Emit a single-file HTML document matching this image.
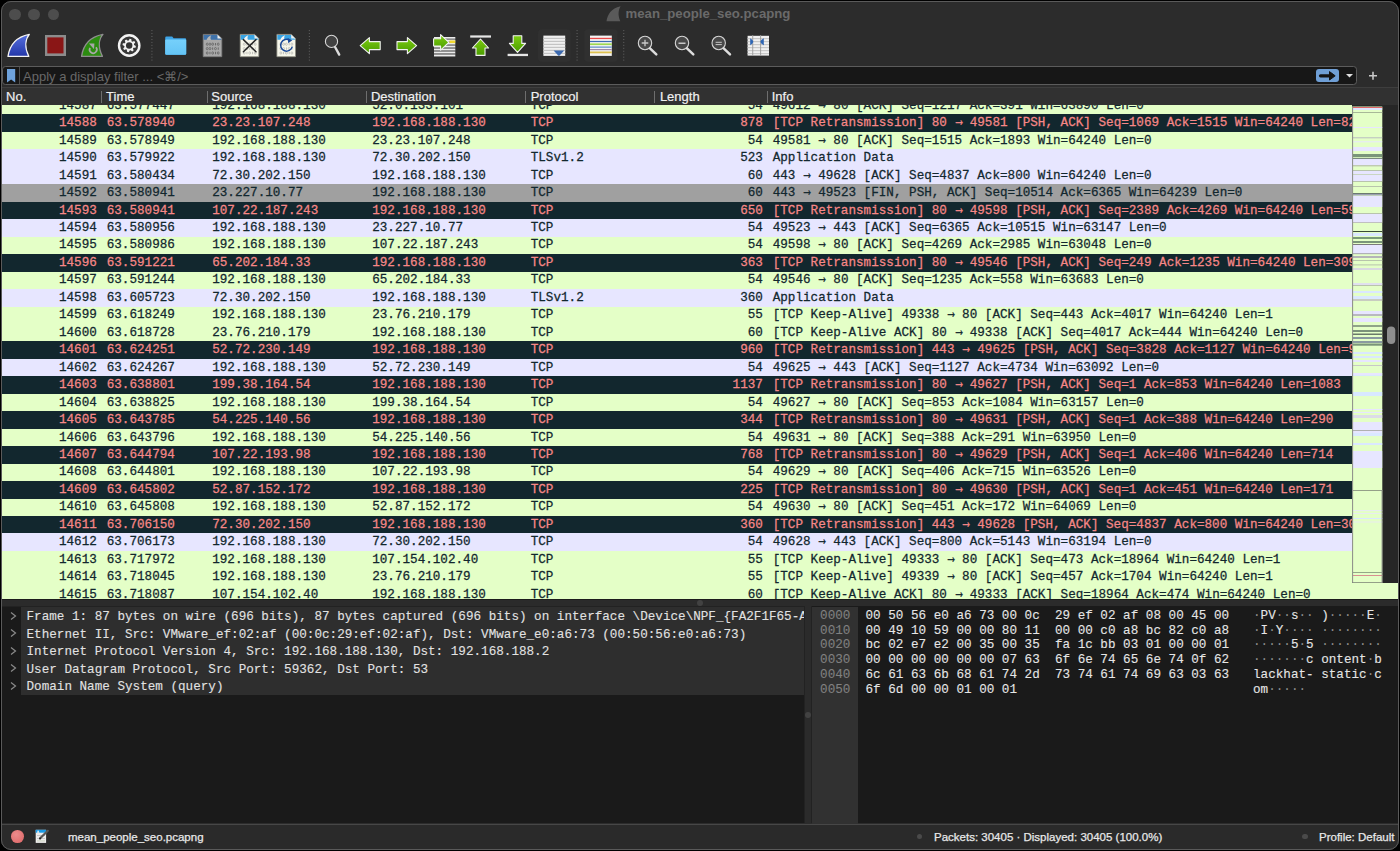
<!DOCTYPE html>
<html><head><meta charset="utf-8">
<style>
*{box-sizing:border-box;margin:0;padding:0}
html,body{width:1400px;height:851px;overflow:hidden;background:#000}
body{position:relative;font-family:"Liberation Sans",sans-serif}
.win{position:absolute;left:0;top:0;width:1400px;height:851px;clip-path:inset(1px 1px 1px 1px round 10px);background:#2c2c2c}
.winb{position:absolute;left:1px;top:1px;width:1398px;height:849px;border-radius:10px;border:1px solid #5a5a5a;z-index:50}
.abs{position:absolute}
.mono{font-family:"Liberation Mono",monospace;font-size:12.63px;white-space:pre}
.r{position:absolute;left:0;width:1397px;height:17.46px;line-height:17.48px}
.r span{position:absolute;top:-0.2px;transform:scaleY(1.04);transform-origin:0 12.5px;-webkit-text-stroke:0.25px currentColor}
.ar{display:inline-block;font-weight:normal;transform:translate(0.4px,-1.5px) scale(0.9,1.45);-webkit-text-stroke:0.35px currentColor}
.g{background:#e4ffc7;color:#12272e}
.l{background:#e7e6ff;color:#12272e}
.d{background:#12272e;color:#f78787}
.s{background:#a0a0a0;color:#12272e}
.hdr span{position:absolute;top:90.4px;font-size:13px;color:#f0f0f0;line-height:14px;-webkit-text-stroke:0.2px currentColor}
.hsep{position:absolute;top:91px;width:1px;height:12px;background:#6e6e6e}
.tr{position:absolute;left:26.5px;color:#e2e2e2;line-height:17.48px;transform:scaleY(1.06);transform-origin:0 12.5px;-webkit-text-stroke:0.1px currentColor}
.chev{position:absolute;left:9.5px}
.hx{position:absolute;color:#e6e6e6;line-height:14.5px;transform:scaleY(1.06);transform-origin:0 11px;-webkit-text-stroke:0.1px currentColor}
.st{position:absolute;top:830px;font-size:11.5px;color:#e8e8e8;line-height:14px;-webkit-text-stroke:0.25px currentColor}
</style></head><body>
<div class="win">

<div class="abs" style="left:625.5px;top:5.5px;font-size:13.2px;font-weight:bold;color:#6a6a6a;line-height:16px">mean_people_seo.pcapng</div>
<svg class="abs" style="left:604px;top:4px" width="20" height="20"><path d="M2.5,17.2 C3.5,11 7,4.2 16.6,2.3 C14.4,6 13.6,11 16.3,17.2 Z" fill="#5a5a5a"/></svg>
<div class="abs" style="left:8.8px;top:8.5px;width:11.8px;height:11.8px;border-radius:50%;background:#4d4d4d"></div>
<div class="abs" style="left:28.1px;top:8.5px;width:11.8px;height:11.8px;border-radius:50%;background:#4d4d4d"></div>
<div class="abs" style="left:47.5px;top:8.5px;width:11.8px;height:11.8px;border-radius:50%;background:#4d4d4d"></div>
<svg class="abs" style="left:0;top:0" width="1400" height="70" viewBox="0 0 1400 70">
<defs>
<linearGradient id="gb" x1="0" y1="0" x2="0" y2="1"><stop offset="0" stop-color="#5670e0"/><stop offset="1" stop-color="#2236a8"/></linearGradient>
<linearGradient id="ga" x1="0" y1="0" x2="0" y2="1"><stop offset="0" stop-color="#7ccc10"/><stop offset="1" stop-color="#4a9c00"/></linearGradient>
<linearGradient id="gf" x1="0" y1="0" x2="0" y2="1"><stop offset="0" stop-color="#76d0fb"/><stop offset="1" stop-color="#64c4f5"/></linearGradient>
</defs>
<path d="M8,56.4 C9.5,46 16,37 29.3,34.4 C25.5,39 24.2,47 28.8,56.4 Z" fill="url(#gb)" stroke="#f4f4f4" stroke-width="1.3" stroke-linejoin="round"/>
<rect x="45" y="35" width="21" height="21" fill="#8c8c8c"/><rect x="47.3" y="37.4" width="16.2" height="16" fill="#8a1616"/>
<path d="M81.6,56.4 C83,46 89.5,37 102.9,34.4 C99,39 97.8,47 102.4,56.4 Z" fill="#2c8c10" stroke="#8e8e8e" stroke-width="1.4" stroke-linejoin="round"/>
<path d="M90.0,47.9 A3.6,3.6 0 1 0 96.0,47.3" fill="none" stroke="#a8a8a8" stroke-width="1.7"/>
<path d="M89,43.4 L94.4,43.4 L94,49.2 Z" fill="#a8a8a8"/>
<circle cx="129.2" cy="45.5" r="10.2" fill="#383838" stroke="#f2f2f2" stroke-width="2.4"/>
<path d="M134.08,45.01 L135.88,45.97 L135.54,47.67 L133.50,47.85 L132.99,48.60 L133.59,50.56 L132.15,51.52 L130.58,50.20 L129.69,50.38 L128.73,52.18 L127.03,51.84 L126.85,49.80 L126.10,49.29 L124.14,49.89 L123.18,48.45 L124.50,46.88 L124.32,45.99 L122.52,45.03 L122.86,43.33 L124.90,43.15 L125.41,42.40 L124.81,40.44 L126.25,39.48 L127.82,40.80 L128.71,40.62 L129.67,38.82 L131.37,39.16 L131.55,41.20 L132.30,41.71 L134.26,41.11 L135.22,42.55 L133.90,44.12 Z" fill="#f2f2f2"/>
<circle cx="129.2" cy="45.5" r="3.2" fill="#333"/>
<rect x="151.3" y="30.10" width="1.2" height="1" fill="#5a5a5a"/>
<rect x="151.3" y="33.05" width="1.2" height="1" fill="#5a5a5a"/>
<rect x="151.3" y="36.00" width="1.2" height="1" fill="#5a5a5a"/>
<rect x="151.3" y="38.95" width="1.2" height="1" fill="#5a5a5a"/>
<rect x="151.3" y="41.90" width="1.2" height="1" fill="#5a5a5a"/>
<rect x="151.3" y="44.85" width="1.2" height="1" fill="#5a5a5a"/>
<rect x="151.3" y="47.80" width="1.2" height="1" fill="#5a5a5a"/>
<rect x="151.3" y="50.75" width="1.2" height="1" fill="#5a5a5a"/>
<rect x="151.3" y="53.70" width="1.2" height="1" fill="#5a5a5a"/>
<rect x="151.3" y="56.65" width="1.2" height="1" fill="#5a5a5a"/>
<rect x="151.3" y="59.60" width="1.2" height="1" fill="#5a5a5a"/>
<rect x="308.8" y="30.10" width="1.2" height="1" fill="#5a5a5a"/>
<rect x="308.8" y="33.05" width="1.2" height="1" fill="#5a5a5a"/>
<rect x="308.8" y="36.00" width="1.2" height="1" fill="#5a5a5a"/>
<rect x="308.8" y="38.95" width="1.2" height="1" fill="#5a5a5a"/>
<rect x="308.8" y="41.90" width="1.2" height="1" fill="#5a5a5a"/>
<rect x="308.8" y="44.85" width="1.2" height="1" fill="#5a5a5a"/>
<rect x="308.8" y="47.80" width="1.2" height="1" fill="#5a5a5a"/>
<rect x="308.8" y="50.75" width="1.2" height="1" fill="#5a5a5a"/>
<rect x="308.8" y="53.70" width="1.2" height="1" fill="#5a5a5a"/>
<rect x="308.8" y="56.65" width="1.2" height="1" fill="#5a5a5a"/>
<rect x="308.8" y="59.60" width="1.2" height="1" fill="#5a5a5a"/>
<rect x="576.5" y="30.10" width="1.2" height="1" fill="#5a5a5a"/>
<rect x="576.5" y="33.05" width="1.2" height="1" fill="#5a5a5a"/>
<rect x="576.5" y="36.00" width="1.2" height="1" fill="#5a5a5a"/>
<rect x="576.5" y="38.95" width="1.2" height="1" fill="#5a5a5a"/>
<rect x="576.5" y="41.90" width="1.2" height="1" fill="#5a5a5a"/>
<rect x="576.5" y="44.85" width="1.2" height="1" fill="#5a5a5a"/>
<rect x="576.5" y="47.80" width="1.2" height="1" fill="#5a5a5a"/>
<rect x="576.5" y="50.75" width="1.2" height="1" fill="#5a5a5a"/>
<rect x="576.5" y="53.70" width="1.2" height="1" fill="#5a5a5a"/>
<rect x="576.5" y="56.65" width="1.2" height="1" fill="#5a5a5a"/>
<rect x="576.5" y="59.60" width="1.2" height="1" fill="#5a5a5a"/>
<rect x="623.1" y="30.10" width="1.2" height="1" fill="#5a5a5a"/>
<rect x="623.1" y="33.05" width="1.2" height="1" fill="#5a5a5a"/>
<rect x="623.1" y="36.00" width="1.2" height="1" fill="#5a5a5a"/>
<rect x="623.1" y="38.95" width="1.2" height="1" fill="#5a5a5a"/>
<rect x="623.1" y="41.90" width="1.2" height="1" fill="#5a5a5a"/>
<rect x="623.1" y="44.85" width="1.2" height="1" fill="#5a5a5a"/>
<rect x="623.1" y="47.80" width="1.2" height="1" fill="#5a5a5a"/>
<rect x="623.1" y="50.75" width="1.2" height="1" fill="#5a5a5a"/>
<rect x="623.1" y="53.70" width="1.2" height="1" fill="#5a5a5a"/>
<rect x="623.1" y="56.65" width="1.2" height="1" fill="#5a5a5a"/>
<rect x="623.1" y="59.60" width="1.2" height="1" fill="#5a5a5a"/>
<path d="M165.2,38 Q165.2,36.6 166.4,36.6 L172.2,36.6 L173.6,38.2 L185,38.2 Q186.2,38.2 186.2,39.4 L186.2,53.6 Q186.2,54.8 185,54.8 L166.4,54.8 Q165.2,54.8 165.2,53.6 Z" fill="#3ea4e6"/>
<path d="M165.2,40.4 Q165.2,39.4 166.4,39.4 L185,39.4 Q186.2,39.4 186.2,40.4 L186.2,53.6 Q186.2,54.8 185,54.8 L166.4,54.8 Q165.2,54.8 165.2,53.6 Z" fill="url(#gf)"/>
<path d="M203.2,34.4 L217.7,34.4 L221.79999999999998,38.5 L221.79999999999998,56.7 L203.2,56.7 Z" fill="#a8a8a8" stroke="#7a7a7a" stroke-width="0.8"/>
<path d="M203.7,35 L217.39999999999998,35 L221.2,38.8 L221.2,39.8 L203.7,39.8 Z" fill="#3f72aa"/>
<path d="M217.5,34.8 L217.5,38.6 L221.39999999999998,38.6 Z" fill="#eeeeee"/>
<path d="M206.6,39.9 C207.39999999999998,37.4 209.0,35.8 211.39999999999998,35.2 C210.39999999999998,36.6 210.2,38.4 211.0,39.9 Z" fill="#b8b8b8"/>
<ellipse cx="207.20" cy="44.20" rx="0.95" ry="1.15" fill="none" stroke="#5c5c5c" stroke-width="0.7"/>
<ellipse cx="209.95" cy="44.20" rx="0.95" ry="1.15" fill="none" stroke="#5c5c5c" stroke-width="0.7"/>
<ellipse cx="212.70" cy="44.20" rx="0.95" ry="1.15" fill="none" stroke="#5c5c5c" stroke-width="0.7"/>
<rect x="215.05" y="43.00" width="0.8" height="2.4" fill="#5c5c5c"/>
<ellipse cx="218.20" cy="44.20" rx="0.95" ry="1.15" fill="none" stroke="#5c5c5c" stroke-width="0.7"/>
<ellipse cx="207.20" cy="48.60" rx="0.95" ry="1.15" fill="none" stroke="#5c5c5c" stroke-width="0.7"/>
<ellipse cx="209.95" cy="48.60" rx="0.95" ry="1.15" fill="none" stroke="#5c5c5c" stroke-width="0.7"/>
<rect x="212.30" y="47.40" width="0.8" height="2.4" fill="#5c5c5c"/>
<ellipse cx="215.45" cy="48.60" rx="0.95" ry="1.15" fill="none" stroke="#5c5c5c" stroke-width="0.7"/>
<rect x="217.80" y="47.40" width="0.8" height="2.4" fill="#5c5c5c"/>
<ellipse cx="207.20" cy="53.00" rx="0.95" ry="1.15" fill="none" stroke="#5c5c5c" stroke-width="0.7"/>
<rect x="209.55" y="51.80" width="0.8" height="2.4" fill="#5c5c5c"/>
<ellipse cx="212.70" cy="53.00" rx="0.95" ry="1.15" fill="none" stroke="#5c5c5c" stroke-width="0.7"/>
<rect x="215.05" y="51.80" width="0.8" height="2.4" fill="#5c5c5c"/>
<ellipse cx="218.20" cy="53.00" rx="0.95" ry="1.15" fill="none" stroke="#5c5c5c" stroke-width="0.7"/>
<path d="M240.2,34.4 L254.7,34.4 L258.8,38.5 L258.8,56.7 L240.2,56.7 Z" fill="#f6f6ea" stroke="#8a8a80" stroke-width="0.8"/>
<path d="M240.7,35 L254.39999999999998,35 L258.2,38.8 L258.2,39.8 L240.7,39.8 Z" fill="#39a4e4"/>
<path d="M254.5,34.8 L254.5,38.6 L258.4,38.6 Z" fill="#eeeeee"/>
<path d="M243.6,39.9 C244.39999999999998,37.4 246.0,35.8 248.39999999999998,35.2 C247.39999999999998,36.6 247.2,38.4 248.0,39.9 Z" fill="#f4f4f4"/>
<ellipse cx="244.20" cy="44.20" rx="0.95" ry="1.15" fill="none" stroke="#b4b4b0" stroke-width="0.7"/>
<ellipse cx="246.95" cy="44.20" rx="0.95" ry="1.15" fill="none" stroke="#b4b4b0" stroke-width="0.7"/>
<ellipse cx="249.70" cy="44.20" rx="0.95" ry="1.15" fill="none" stroke="#b4b4b0" stroke-width="0.7"/>
<rect x="252.05" y="43.00" width="0.8" height="2.4" fill="#b4b4b0"/>
<ellipse cx="255.20" cy="44.20" rx="0.95" ry="1.15" fill="none" stroke="#b4b4b0" stroke-width="0.7"/>
<ellipse cx="244.20" cy="48.60" rx="0.95" ry="1.15" fill="none" stroke="#b4b4b0" stroke-width="0.7"/>
<ellipse cx="246.95" cy="48.60" rx="0.95" ry="1.15" fill="none" stroke="#b4b4b0" stroke-width="0.7"/>
<rect x="249.30" y="47.40" width="0.8" height="2.4" fill="#b4b4b0"/>
<ellipse cx="252.45" cy="48.60" rx="0.95" ry="1.15" fill="none" stroke="#b4b4b0" stroke-width="0.7"/>
<rect x="254.80" y="47.40" width="0.8" height="2.4" fill="#b4b4b0"/>
<ellipse cx="244.20" cy="53.00" rx="0.95" ry="1.15" fill="none" stroke="#b4b4b0" stroke-width="0.7"/>
<rect x="246.55" y="51.80" width="0.8" height="2.4" fill="#b4b4b0"/>
<ellipse cx="249.70" cy="53.00" rx="0.95" ry="1.15" fill="none" stroke="#b4b4b0" stroke-width="0.7"/>
<rect x="252.05" y="51.80" width="0.8" height="2.4" fill="#b4b4b0"/>
<ellipse cx="255.20" cy="53.00" rx="0.95" ry="1.15" fill="none" stroke="#b4b4b0" stroke-width="0.7"/>
<path d="M243.4,39.6 L256,51.8 M256,39.6 L243.4,51.8" stroke="#262626" stroke-width="1.5" stroke-linecap="round"/>
<path d="M276.9,34.4 L291.4,34.4 L295.5,38.5 L295.5,56.7 L276.9,56.7 Z" fill="#f6f6ea" stroke="#8a8a80" stroke-width="0.8"/>
<path d="M277.4,35 L291.09999999999997,35 L294.9,38.8 L294.9,39.8 L277.4,39.8 Z" fill="#39a4e4"/>
<path d="M291.2,34.8 L291.2,38.6 L295.09999999999997,38.6 Z" fill="#eeeeee"/>
<path d="M280.29999999999995,39.9 C281.09999999999997,37.4 282.7,35.8 285.09999999999997,35.2 C284.09999999999997,36.6 283.9,38.4 284.7,39.9 Z" fill="#f4f4f4"/>
<ellipse cx="280.90" cy="44.20" rx="0.95" ry="1.15" fill="none" stroke="#b4b4b0" stroke-width="0.7"/>
<ellipse cx="283.65" cy="44.20" rx="0.95" ry="1.15" fill="none" stroke="#b4b4b0" stroke-width="0.7"/>
<ellipse cx="286.40" cy="44.20" rx="0.95" ry="1.15" fill="none" stroke="#b4b4b0" stroke-width="0.7"/>
<rect x="288.75" y="43.00" width="0.8" height="2.4" fill="#b4b4b0"/>
<ellipse cx="291.90" cy="44.20" rx="0.95" ry="1.15" fill="none" stroke="#b4b4b0" stroke-width="0.7"/>
<ellipse cx="280.90" cy="48.60" rx="0.95" ry="1.15" fill="none" stroke="#b4b4b0" stroke-width="0.7"/>
<ellipse cx="283.65" cy="48.60" rx="0.95" ry="1.15" fill="none" stroke="#b4b4b0" stroke-width="0.7"/>
<rect x="286.00" y="47.40" width="0.8" height="2.4" fill="#b4b4b0"/>
<ellipse cx="289.15" cy="48.60" rx="0.95" ry="1.15" fill="none" stroke="#b4b4b0" stroke-width="0.7"/>
<rect x="291.50" y="47.40" width="0.8" height="2.4" fill="#b4b4b0"/>
<ellipse cx="280.90" cy="53.00" rx="0.95" ry="1.15" fill="none" stroke="#b4b4b0" stroke-width="0.7"/>
<rect x="283.25" y="51.80" width="0.8" height="2.4" fill="#b4b4b0"/>
<ellipse cx="286.40" cy="53.00" rx="0.95" ry="1.15" fill="none" stroke="#b4b4b0" stroke-width="0.7"/>
<rect x="288.75" y="51.80" width="0.8" height="2.4" fill="#b4b4b0"/>
<ellipse cx="291.90" cy="53.00" rx="0.95" ry="1.15" fill="none" stroke="#b4b4b0" stroke-width="0.7"/>
<path d="M289.8,40.3 A5.9,5.9 0 1 0 292.3,46.6" fill="none" stroke="#1c4a98" stroke-width="1.5"/>
<path d="M287.6,37.9 L292.3,40.2 L288.3,43.2 Z" fill="#1c4a98"/>
<circle cx="331.5" cy="41.4" r="6.1" fill="#424242" stroke="#d8d8d8" stroke-width="1.1"/>
<path d="M335.2,47.2 L339.2,54.6" stroke="#dcdcdc" stroke-width="2.4" stroke-linecap="round"/>
<path d="M360.2,45.6 L369.4,37.6 L369.4,41.6 L380.2,41.6 L380.2,49.6 L369.4,49.6 L369.4,53.7 Z" fill="url(#ga)" stroke="#f2f2f2" stroke-width="1.1" stroke-linejoin="round"/>
<path d="M416.6,45.6 L407.4,37.6 L407.4,41.6 L397,41.6 L397,49.6 L407.4,49.6 L407.4,53.7 Z" fill="url(#ga)" stroke="#f2f2f2" stroke-width="1.1" stroke-linejoin="round"/>
<rect x="434" y="37.00" width="21.3" height="1.75" fill="#ececec"/>
<rect x="434" y="38.75" width="21.3" height="1.2" fill="#8c8c8c"/>
<rect x="434" y="39.95" width="21.3" height="1.75" fill="#ececec"/>
<rect x="434" y="41.70" width="21.3" height="1.2" fill="#8c8c8c"/>
<rect x="434" y="42.90" width="21.3" height="1.75" fill="#ececec"/>
<rect x="434" y="44.65" width="21.3" height="1.2" fill="#8c8c8c"/>
<rect x="434" y="45.85" width="21.3" height="1.75" fill="#ececec"/>
<rect x="434" y="47.60" width="21.3" height="1.2" fill="#8c8c8c"/>
<rect x="434" y="48.80" width="21.3" height="1.75" fill="#ececec"/>
<rect x="434" y="50.55" width="21.3" height="1.2" fill="#8c8c8c"/>
<rect x="434" y="51.75" width="21.3" height="1.75" fill="#ececec"/>
<rect x="434" y="53.50" width="21.3" height="1.2" fill="#8c8c8c"/>
<rect x="434" y="54.70" width="21.3" height="1.75" fill="#ececec"/>
<rect x="449.5" y="40.5" width="5.8" height="2.6" fill="#f2d830"/>
<path d="M448.8,42.4 L440.6,34.6 L440.6,38.8 L433.6,38.8 L433.6,46 L440.6,46 L440.6,50.2 Z" fill="url(#ga)" stroke="#f2f2f2" stroke-width="1.1" stroke-linejoin="round"/>
<rect x="470.2" y="35.4" width="20.8" height="2.2" fill="#e6e6e6"/>
<path d="M480.5,39 L488.6,48 L485,48 L485,55.4 L476,55.4 L476,48 L472.4,48 Z" fill="url(#ga)" stroke="#f2f2f2" stroke-width="1.1" stroke-linejoin="round"/>
<path d="M517.5,52.4 L525.6,43.4 L521.8,43.4 L521.8,35.7 L513.2,35.7 L513.2,43.4 L509.4,43.4 Z" fill="url(#ga)" stroke="#f2f2f2" stroke-width="1.1" stroke-linejoin="round"/>
<rect x="507.6" y="53.8" width="20.4" height="2.3" fill="#e6e6e6"/>
<rect x="538" y="29.2" width="32.7" height="32.5" rx="4" fill="#303030"/>
<rect x="543.4" y="35.6" width="21.8" height="20.3" fill="#f0f0f0"/>
<rect x="543.4" y="37.80" width="21.8" height="1.2" fill="#c4c4c4"/>
<rect x="543.4" y="40.80" width="21.8" height="1.2" fill="#c4c4c4"/>
<rect x="543.4" y="43.80" width="21.8" height="1.2" fill="#c4c4c4"/>
<rect x="543.4" y="46.80" width="21.8" height="1.2" fill="#c4c4c4"/>
<rect x="543.4" y="49.80" width="21.8" height="1.2" fill="#c4c4c4"/>
<rect x="543.4" y="52.80" width="21.8" height="1.2" fill="#c4c4c4"/>
<path d="M553.6,50.4 L564.2,50.4 L559.4,55.8 L558.4,55.8 Z" fill="#3a68ae"/>
<rect x="584.2" y="29.2" width="33.4" height="32.5" rx="4" fill="#303030"/>
<rect x="590" y="35.6" width="21.8" height="20.3" fill="#f4f4f4"/>
<rect x="590" y="37.8" width="21.8" height="1.3" fill="#e84848"/>
<rect x="590" y="40.9" width="21.8" height="1.2" fill="#3f6cb4"/>
<rect x="590" y="43.4" width="21.8" height="1.7" fill="#9ed850"/>
<rect x="590" y="46.4" width="21.8" height="1.5" fill="#7aa0d0"/>
<rect x="590" y="49.0" width="21.8" height="1.2" fill="#a08aa8"/>
<rect x="590" y="51.5" width="21.8" height="1.8" fill="#dcc050"/>
<circle cx="645" cy="43" r="6.7" fill="#484848" stroke="#d4d4d4" stroke-width="1.1"/>
<path d="M650,48.4 L656.3,54.4" stroke="#dcdcdc" stroke-width="2.5" stroke-linecap="round"/>
<path d="M641.7,43 L648.3,43 M645,39.7 L645,46.3" stroke="#c8c8c8" stroke-width="1.3"/>
<circle cx="682" cy="43" r="6.7" fill="#484848" stroke="#d4d4d4" stroke-width="1.1"/>
<path d="M687,48.4 L693.3,54.4" stroke="#dcdcdc" stroke-width="2.5" stroke-linecap="round"/>
<path d="M678.5,43.2 L685.5,43.2" stroke="#c8c8c8" stroke-width="1.5"/>
<circle cx="718.7" cy="43" r="6.7" fill="#484848" stroke="#d4d4d4" stroke-width="1.1"/>
<path d="M723.7,48.4 L730.0,54.4" stroke="#dcdcdc" stroke-width="2.5" stroke-linecap="round"/>
<path d="M715.6,42.3 L721.8,42.3 M715.6,44.6 L721.8,44.6" stroke="#c8c8c8" stroke-width="1"/>
<rect x="747.6" y="35.8" width="21.4" height="19.8" fill="#f0f0f0"/>
<rect x="747.6" y="38.00" width="21.4" height="1.2" fill="#c8c8c8"/>
<rect x="747.6" y="41.00" width="21.4" height="1.2" fill="#c8c8c8"/>
<rect x="747.6" y="44.00" width="21.4" height="1.2" fill="#c8c8c8"/>
<rect x="747.6" y="47.00" width="21.4" height="1.2" fill="#c8c8c8"/>
<rect x="747.6" y="50.00" width="21.4" height="1.2" fill="#c8c8c8"/>
<rect x="747.6" y="53.00" width="21.4" height="1.2" fill="#c8c8c8"/>
<rect x="752.3" y="35" width="0.9" height="21" fill="#9a9a9a"/><rect x="760.2" y="35" width="0.9" height="21" fill="#9a9a9a"/>
<path d="M750.2,38.2 Q753.3,40 753.3,41.8 Q753.3,43.6 750.2,45.2 Z" fill="#2f66b4"/>
<path d="M763.8,38.2 Q760.4,40 760.4,41.8 Q760.4,43.6 763.8,45.2 Z" fill="#2f66b4"/>
</svg>
<div class="abs" style="left:2px;top:66.2px;width:1355px;height:18.8px;border:1px solid #5c5c5c;border-radius:3.5px;background:#171717"></div>
<div class="abs" style="left:19px;top:67px;width:1px;height:17.4px;background:#4e4e4e"></div>
<svg class="abs" style="left:0;top:60px" width="30" height="30"><path d="M7,9 L15.2,9 L15.2,22.5 L11.1,19.6 L7,22.5 Z" fill="#6ea2dc"/></svg>
<div class="abs" style="left:23px;top:69.5px;font-size:13px;color:#686868;line-height:14px">Apply a display filter ... &lt;⌘/&gt;</div>
<div class="abs" style="left:1315.7px;top:68.9px;width:23.2px;height:13.6px;border-radius:3px;background:#6f9fd6"></div>
<svg class="abs" style="left:1300px;top:60px" width="100" height="30"><path d="M20.5,15.8 L31,15.8" stroke="#141414" stroke-width="3.2" stroke-linecap="round"/><path d="M29.5,11.6 L35.2,15.8 L29.5,20 Z" fill="#141414" stroke="#141414" stroke-width="1" stroke-linejoin="round"/><path d="M46,14 L53,14 L49.5,17.6 Z" fill="#e0e0e0"/><path d="M69,15.7 L77,15.7 M73,11.7 L73,19.7" stroke="#c8c8c8" stroke-width="1.6"/></svg>
<div class="abs" style="left:0;top:87px;width:1400px;height:1px;background:#3e3e3e"></div>
<div class="abs" style="left:0;top:88px;width:1400px;height:17.3px;background:#313131"></div>
<div class="hdr">
<span style="left:6.1px">No.</span>
<span style="left:106.1px">Time</span>
<span style="left:211.3px">Source</span>
<span style="left:370.9px">Destination</span>
<span style="left:530.7px">Protocol</span>
<span style="left:659.9px">Length</span>
<span style="left:771.7px">Info</span>
<div class="hsep" style="left:101.0px"></div>
<div class="hsep" style="left:206.9px"></div>
<div class="hsep" style="left:365.9px"></div>
<div class="hsep" style="left:524.9px"></div>
<div class="hsep" style="left:654.0px"></div>
<div class="hsep" style="left:767.0px"></div>
</div>
<div class="abs" style="left:0;top:105.3px;width:1400px;height:493.50px;overflow:hidden">
<div class="r g mono" style="top:-8.30px;width:1400px"><span style="right:1303.2px">14587</span><span style="left:106.7px">63.577447</span><span style="left:212.2px">192.168.188.130</span><span style="left:372.2px">52.0.133.101</span><span style="left:530.7px">TCP</span><span style="right:637.1px">54</span><span style="left:772.7px">49612 <b class=ar>→</b> 80 [ACK] Seq=1217 Ack=391 Win=63890 Len=0</span></div>
<div class="r d mono" style="top:9.16px;width:1400px"><span style="right:1303.2px">14588</span><span style="left:106.7px">63.578940</span><span style="left:212.2px">23.23.107.248</span><span style="left:372.2px">192.168.188.130</span><span style="left:530.7px">TCP</span><span style="right:637.1px">878</span><span style="left:772.7px">[TCP Retransmission] 80 <b class=ar>→</b> 49581 [PSH, ACK] Seq=1069 Ack=1515 Win=64240 Len=824</span></div>
<div class="r g mono" style="top:26.62px;width:1400px"><span style="right:1303.2px">14589</span><span style="left:106.7px">63.578949</span><span style="left:212.2px">192.168.188.130</span><span style="left:372.2px">23.23.107.248</span><span style="left:530.7px">TCP</span><span style="right:637.1px">54</span><span style="left:772.7px">49581 <b class=ar>→</b> 80 [ACK] Seq=1515 Ack=1893 Win=64240 Len=0</span></div>
<div class="r l mono" style="top:44.08px;width:1400px"><span style="right:1303.2px">14590</span><span style="left:106.7px">63.579922</span><span style="left:212.2px">192.168.188.130</span><span style="left:372.2px">72.30.202.150</span><span style="left:530.7px">TLSv1.2</span><span style="right:637.1px">523</span><span style="left:772.7px">Application Data</span></div>
<div class="r l mono" style="top:61.54px;width:1400px"><span style="right:1303.2px">14591</span><span style="left:106.7px">63.580434</span><span style="left:212.2px">72.30.202.150</span><span style="left:372.2px">192.168.188.130</span><span style="left:530.7px">TCP</span><span style="right:637.1px">60</span><span style="left:772.7px">443 <b class=ar>→</b> 49628 [ACK] Seq=4837 Ack=800 Win=64240 Len=0</span></div>
<div class="r s mono" style="top:79.00px;width:1400px"><span style="right:1303.2px">14592</span><span style="left:106.7px">63.580941</span><span style="left:212.2px">23.227.10.77</span><span style="left:372.2px">192.168.188.130</span><span style="left:530.7px">TCP</span><span style="right:637.1px">60</span><span style="left:772.7px">443 <b class=ar>→</b> 49523 [FIN, PSH, ACK] Seq=10514 Ack=6365 Win=64239 Len=0</span></div>
<div class="r d mono" style="top:96.46px;width:1400px"><span style="right:1303.2px">14593</span><span style="left:106.7px">63.580941</span><span style="left:212.2px">107.22.187.243</span><span style="left:372.2px">192.168.188.130</span><span style="left:530.7px">TCP</span><span style="right:637.1px">650</span><span style="left:772.7px">[TCP Retransmission] 80 <b class=ar>→</b> 49598 [PSH, ACK] Seq=2389 Ack=4269 Win=64240 Len=596</span></div>
<div class="r l mono" style="top:113.92px;width:1400px"><span style="right:1303.2px">14594</span><span style="left:106.7px">63.580956</span><span style="left:212.2px">192.168.188.130</span><span style="left:372.2px">23.227.10.77</span><span style="left:530.7px">TCP</span><span style="right:637.1px">54</span><span style="left:772.7px">49523 <b class=ar>→</b> 443 [ACK] Seq=6365 Ack=10515 Win=63147 Len=0</span></div>
<div class="r g mono" style="top:131.38px;width:1400px"><span style="right:1303.2px">14595</span><span style="left:106.7px">63.580986</span><span style="left:212.2px">192.168.188.130</span><span style="left:372.2px">107.22.187.243</span><span style="left:530.7px">TCP</span><span style="right:637.1px">54</span><span style="left:772.7px">49598 <b class=ar>→</b> 80 [ACK] Seq=4269 Ack=2985 Win=63048 Len=0</span></div>
<div class="r d mono" style="top:148.84px;width:1400px"><span style="right:1303.2px">14596</span><span style="left:106.7px">63.591221</span><span style="left:212.2px">65.202.184.33</span><span style="left:372.2px">192.168.188.130</span><span style="left:530.7px">TCP</span><span style="right:637.1px">363</span><span style="left:772.7px">[TCP Retransmission] 80 <b class=ar>→</b> 49546 [PSH, ACK] Seq=249 Ack=1235 Win=64240 Len=309</span></div>
<div class="r g mono" style="top:166.30px;width:1400px"><span style="right:1303.2px">14597</span><span style="left:106.7px">63.591244</span><span style="left:212.2px">192.168.188.130</span><span style="left:372.2px">65.202.184.33</span><span style="left:530.7px">TCP</span><span style="right:637.1px">54</span><span style="left:772.7px">49546 <b class=ar>→</b> 80 [ACK] Seq=1235 Ack=558 Win=63683 Len=0</span></div>
<div class="r l mono" style="top:183.76px;width:1400px"><span style="right:1303.2px">14598</span><span style="left:106.7px">63.605723</span><span style="left:212.2px">72.30.202.150</span><span style="left:372.2px">192.168.188.130</span><span style="left:530.7px">TLSv1.2</span><span style="right:637.1px">360</span><span style="left:772.7px">Application Data</span></div>
<div class="r g mono" style="top:201.22px;width:1400px"><span style="right:1303.2px">14599</span><span style="left:106.7px">63.618249</span><span style="left:212.2px">192.168.188.130</span><span style="left:372.2px">23.76.210.179</span><span style="left:530.7px">TCP</span><span style="right:637.1px">55</span><span style="left:772.7px">[TCP Keep-Alive] 49338 <b class=ar>→</b> 80 [ACK] Seq=443 Ack=4017 Win=64240 Len=1</span></div>
<div class="r g mono" style="top:218.68px;width:1400px"><span style="right:1303.2px">14600</span><span style="left:106.7px">63.618728</span><span style="left:212.2px">23.76.210.179</span><span style="left:372.2px">192.168.188.130</span><span style="left:530.7px">TCP</span><span style="right:637.1px">60</span><span style="left:772.7px">[TCP Keep-Alive ACK] 80 <b class=ar>→</b> 49338 [ACK] Seq=4017 Ack=444 Win=64240 Len=0</span></div>
<div class="r d mono" style="top:236.14px;width:1400px"><span style="right:1303.2px">14601</span><span style="left:106.7px">63.624251</span><span style="left:212.2px">52.72.230.149</span><span style="left:372.2px">192.168.188.130</span><span style="left:530.7px">TCP</span><span style="right:637.1px">960</span><span style="left:772.7px">[TCP Retransmission] 443 <b class=ar>→</b> 49625 [PSH, ACK] Seq=3828 Ack=1127 Win=64240 Len=906</span></div>
<div class="r l mono" style="top:253.60px;width:1400px"><span style="right:1303.2px">14602</span><span style="left:106.7px">63.624267</span><span style="left:212.2px">192.168.188.130</span><span style="left:372.2px">52.72.230.149</span><span style="left:530.7px">TCP</span><span style="right:637.1px">54</span><span style="left:772.7px">49625 <b class=ar>→</b> 443 [ACK] Seq=1127 Ack=4734 Win=63092 Len=0</span></div>
<div class="r d mono" style="top:271.06px;width:1400px"><span style="right:1303.2px">14603</span><span style="left:106.7px">63.638801</span><span style="left:212.2px">199.38.164.54</span><span style="left:372.2px">192.168.188.130</span><span style="left:530.7px">TCP</span><span style="right:637.1px">1137</span><span style="left:772.7px">[TCP Retransmission] 80 <b class=ar>→</b> 49627 [PSH, ACK] Seq=1 Ack=853 Win=64240 Len=1083</span></div>
<div class="r g mono" style="top:288.52px;width:1400px"><span style="right:1303.2px">14604</span><span style="left:106.7px">63.638825</span><span style="left:212.2px">192.168.188.130</span><span style="left:372.2px">199.38.164.54</span><span style="left:530.7px">TCP</span><span style="right:637.1px">54</span><span style="left:772.7px">49627 <b class=ar>→</b> 80 [ACK] Seq=853 Ack=1084 Win=63157 Len=0</span></div>
<div class="r d mono" style="top:305.98px;width:1400px"><span style="right:1303.2px">14605</span><span style="left:106.7px">63.643785</span><span style="left:212.2px">54.225.140.56</span><span style="left:372.2px">192.168.188.130</span><span style="left:530.7px">TCP</span><span style="right:637.1px">344</span><span style="left:772.7px">[TCP Retransmission] 80 <b class=ar>→</b> 49631 [PSH, ACK] Seq=1 Ack=388 Win=64240 Len=290</span></div>
<div class="r g mono" style="top:323.44px;width:1400px"><span style="right:1303.2px">14606</span><span style="left:106.7px">63.643796</span><span style="left:212.2px">192.168.188.130</span><span style="left:372.2px">54.225.140.56</span><span style="left:530.7px">TCP</span><span style="right:637.1px">54</span><span style="left:772.7px">49631 <b class=ar>→</b> 80 [ACK] Seq=388 Ack=291 Win=63950 Len=0</span></div>
<div class="r d mono" style="top:340.90px;width:1400px"><span style="right:1303.2px">14607</span><span style="left:106.7px">63.644794</span><span style="left:212.2px">107.22.193.98</span><span style="left:372.2px">192.168.188.130</span><span style="left:530.7px">TCP</span><span style="right:637.1px">768</span><span style="left:772.7px">[TCP Retransmission] 80 <b class=ar>→</b> 49629 [PSH, ACK] Seq=1 Ack=406 Win=64240 Len=714</span></div>
<div class="r g mono" style="top:358.36px;width:1400px"><span style="right:1303.2px">14608</span><span style="left:106.7px">63.644801</span><span style="left:212.2px">192.168.188.130</span><span style="left:372.2px">107.22.193.98</span><span style="left:530.7px">TCP</span><span style="right:637.1px">54</span><span style="left:772.7px">49629 <b class=ar>→</b> 80 [ACK] Seq=406 Ack=715 Win=63526 Len=0</span></div>
<div class="r d mono" style="top:375.82px;width:1400px"><span style="right:1303.2px">14609</span><span style="left:106.7px">63.645802</span><span style="left:212.2px">52.87.152.172</span><span style="left:372.2px">192.168.188.130</span><span style="left:530.7px">TCP</span><span style="right:637.1px">225</span><span style="left:772.7px">[TCP Retransmission] 80 <b class=ar>→</b> 49630 [PSH, ACK] Seq=1 Ack=451 Win=64240 Len=171</span></div>
<div class="r g mono" style="top:393.28px;width:1400px"><span style="right:1303.2px">14610</span><span style="left:106.7px">63.645808</span><span style="left:212.2px">192.168.188.130</span><span style="left:372.2px">52.87.152.172</span><span style="left:530.7px">TCP</span><span style="right:637.1px">54</span><span style="left:772.7px">49630 <b class=ar>→</b> 80 [ACK] Seq=451 Ack=172 Win=64069 Len=0</span></div>
<div class="r d mono" style="top:410.74px;width:1400px"><span style="right:1303.2px">14611</span><span style="left:106.7px">63.706150</span><span style="left:212.2px">72.30.202.150</span><span style="left:372.2px">192.168.188.130</span><span style="left:530.7px">TCP</span><span style="right:637.1px">360</span><span style="left:772.7px">[TCP Retransmission] 443 <b class=ar>→</b> 49628 [PSH, ACK] Seq=4837 Ack=800 Win=64240 Len=306</span></div>
<div class="r l mono" style="top:428.20px;width:1400px"><span style="right:1303.2px">14612</span><span style="left:106.7px">63.706173</span><span style="left:212.2px">192.168.188.130</span><span style="left:372.2px">72.30.202.150</span><span style="left:530.7px">TCP</span><span style="right:637.1px">54</span><span style="left:772.7px">49628 <b class=ar>→</b> 443 [ACK] Seq=800 Ack=5143 Win=63194 Len=0</span></div>
<div class="r g mono" style="top:445.66px;width:1400px"><span style="right:1303.2px">14613</span><span style="left:106.7px">63.717972</span><span style="left:212.2px">192.168.188.130</span><span style="left:372.2px">107.154.102.40</span><span style="left:530.7px">TCP</span><span style="right:637.1px">55</span><span style="left:772.7px">[TCP Keep-Alive] 49333 <b class=ar>→</b> 80 [ACK] Seq=473 Ack=18964 Win=64240 Len=1</span></div>
<div class="r g mono" style="top:463.12px;width:1400px"><span style="right:1303.2px">14614</span><span style="left:106.7px">63.718045</span><span style="left:212.2px">192.168.188.130</span><span style="left:372.2px">23.76.210.179</span><span style="left:530.7px">TCP</span><span style="right:637.1px">55</span><span style="left:772.7px">[TCP Keep-Alive] 49339 <b class=ar>→</b> 80 [ACK] Seq=457 Ack=1704 Win=64240 Len=1</span></div>
<div class="r g mono" style="top:480.58px;width:1400px"><span style="right:1303.2px">14615</span><span style="left:106.7px">63.718087</span><span style="left:212.2px">107.154.102.40</span><span style="left:372.2px">192.168.188.130</span><span style="left:530.7px">TCP</span><span style="right:637.1px">60</span><span style="left:772.7px">[TCP Keep-Alive ACK] 80 <b class=ar>→</b> 49333 [ACK] Seq=18964 Ack=474 Win=64240 Len=0</span></div>
</div>
<div class="abs" style="left:1352.2px;top:105.3px;width:48px;height:477.5px;background:#262626"></div>
<svg class="abs" style="left:0;top:0" width="1400" height="600">
<rect x="1352.3" y="106.5" width="30" height="476" fill="#e4ffc7"/>
<rect x="1353" y="107" width="29.2" height="1" fill="#e06868"/>
<rect x="1353" y="108" width="29.2" height="2" fill="#dde6ff"/>
<rect x="1353" y="112" width="29.2" height="1" fill="#a8b898"/>
<rect x="1353" y="127" width="29.2" height="1" fill="#e7e6ff"/>
<rect x="1353" y="137.3" width="29.2" height="1" fill="#b8bcc0"/>
<rect x="1353" y="141.3" width="29.2" height="1" fill="#e7e6ff"/>
<rect x="1353" y="147" width="29.2" height="4" fill="#e7e6ff"/>
<rect x="1353" y="154" width="29.2" height="3.2" fill="#7a957a"/>
<rect x="1353" y="158" width="29.2" height="1" fill="#7a8a80"/>
<rect x="1353" y="159" width="29.2" height="6" fill="#e7e6ff"/>
<rect x="1353" y="165.3" width="29.2" height="1" fill="#b0b4a8"/>
<rect x="1353" y="170" width="29.2" height="1" fill="#b8c4ac"/>
<rect x="1353" y="171" width="29.2" height="3.5" fill="#e7e6ff"/>
<rect x="1353" y="174.4" width="29.2" height="1" fill="#b8c4ac"/>
<rect x="1353" y="175" width="29.2" height="6" fill="#e7e6ff"/>
<rect x="1353" y="181" width="29.2" height="1" fill="#b8c4ac"/>
<rect x="1353" y="186" width="29.2" height="1" fill="#b8c4ac"/>
<rect x="1353" y="193" width="29.2" height="1" fill="#6a7a70"/>
<rect x="1353" y="194" width="29.2" height="1.5" fill="#9aa0b0"/>
<rect x="1353" y="196" width="29.2" height="11" fill="#e7e6ff"/>
<rect x="1353" y="213" width="29.2" height="1" fill="#b8c4ac"/>
<rect x="1353" y="214" width="29.2" height="8" fill="#e7e6ff"/>
<rect x="1353" y="222" width="29.2" height="1" fill="#c0c0c0"/>
<rect x="1353" y="231" width="29.2" height="1" fill="#3a4a3a"/>
<rect x="1353" y="233" width="29.2" height="3" fill="#dae8ff"/>
<rect x="1353" y="237" width="29.2" height="2" fill="#7a9a7a"/>
<rect x="1353" y="241" width="29.2" height="2" fill="#7a957a"/>
<rect x="1353" y="244" width="29.2" height="1" fill="#7a7a7a"/>
<rect x="1353" y="245" width="29.2" height="8" fill="#e7e6ff"/>
<rect x="1353" y="253" width="29.2" height="1.2" fill="#b0b0b8"/>
<rect x="1353" y="256" width="29.2" height="2" fill="#b4b4b8"/>
<rect x="1353" y="260" width="29.2" height="1" fill="#b8c4ac"/>
<rect x="1353" y="264.4" width="29.2" height="1" fill="#b8c4ac"/>
<rect x="1353" y="268" width="29.2" height="2" fill="#d8d8e0"/>
<rect x="1353" y="283" width="29.2" height="2" fill="#e0e0ee"/>
<rect x="1353" y="285" width="29.2" height="1" fill="#b8c4ac"/>
<rect x="1353" y="291" width="29.2" height="2" fill="#dae8ff"/>
<rect x="1353" y="296" width="29.2" height="3" fill="#dae8ff"/>
<rect x="1353" y="299" width="29.2" height="2" fill="#c8ccc0"/>
<rect x="1353" y="311" width="29.2" height="3" fill="#e7e6ff"/>
<rect x="1353" y="314" width="29.2" height="2" fill="#b8b8c0"/>
<rect x="1353" y="318" width="29.2" height="4" fill="#e7e6ff"/>
<rect x="1353" y="325.5" width="29.2" height="1" fill="#3a4a4a"/>
<rect x="1353" y="330.5" width="29.2" height="1" fill="#12272e"/>
<rect x="1353" y="333.5" width="29.2" height="1.5" fill="#6a7a6a"/>
<rect x="1353" y="337" width="29.2" height="2" fill="#8a9aa0"/>
<rect x="1353" y="341" width="29.2" height="2" fill="#8a9aa0"/>
<rect x="1353" y="343.5" width="29.2" height="2.2" fill="#7a957a"/>
<rect x="1353" y="352" width="29.2" height="2" fill="#dae8ff"/>
<rect x="1353" y="356" width="29.2" height="2" fill="#dae8ff"/>
<rect x="1353" y="360" width="29.2" height="2" fill="#e7e6ff"/>
<rect x="1353" y="365" width="29.2" height="1" fill="#c8c8c8"/>
<rect x="1353" y="373" width="29.2" height="2" fill="#e7e6ff"/>
<rect x="1353" y="375" width="29.2" height="1" fill="#dae8ff"/>
<rect x="1353" y="392" width="29.2" height="4" fill="#d8e8ff"/>
<rect x="1353" y="409" width="29.2" height="1" fill="#e7e6ff"/>
<rect x="1353" y="412" width="29.2" height="1" fill="#e7e6ff"/>
<rect x="1353" y="415" width="29.2" height="3" fill="#dcdce8"/>
<rect x="1353" y="422" width="29.2" height="8" fill="#e7e6ff"/>
<rect x="1353" y="430" width="29.2" height="1" fill="#b0b0b0"/>
<rect x="1353" y="431" width="29.2" height="2" fill="#e7e6ff"/>
<rect x="1353" y="433" width="29.2" height="3" fill="#dae8ff"/>
<rect x="1353" y="443" width="29.2" height="2" fill="#dae8ff"/>
<rect x="1353" y="451" width="29.2" height="17" fill="#e7e6ff"/>
<rect x="1353" y="490" width="29.2" height="1" fill="#94a088"/>
<rect x="1353" y="510" width="29.2" height="1" fill="#e8ecf0"/>
<rect x="1353" y="513" width="29.2" height="1" fill="#e8ecf0"/>
<rect x="1353" y="518" width="29.2" height="1" fill="#dae8ff"/>
<rect x="1353" y="521.5" width="29.2" height="1" fill="#e8ecf0"/>
<rect x="1353" y="572" width="29.2" height="1" fill="#94a888"/>
<rect x="1353" y="575" width="29.2" height="1" fill="#d89090"/>
<rect x="1353" y="582" width="29.2" height="1" fill="#94a088"/>
<rect x="1352.2" y="106.5" width="0.9" height="476.5" fill="#8c8c8c"/>
<rect x="1381.6" y="490" width="0.8" height="93" fill="#8c8c8c"/>
<rect x="1387" y="326.5" width="8.3" height="17.6" rx="4.1" fill="#8e8e8e"/>
</svg>
<div class="abs" style="left:0;top:598.8px;width:1400px;height:1.2px;background:#1c1c1c"></div>
<div class="abs" style="left:0;top:600px;width:1400px;height:6.4px;background:#2b2b2b"></div>
<div class="abs" style="left:0;top:606.4px;width:804.3px;height:217px;background:#1a1a1a"></div>
<div class="abs" style="left:21px;top:607px;width:783.3px;height:88px;background:#2e2e2e"></div>
<div class="abs" style="left:804.3px;top:606.4px;width:7.7px;height:217px;background:#2b2b2b"></div>
<div class="abs" style="left:803.6px;top:606.4px;width:1px;height:217px;background:#222"></div>
<div class="abs" style="left:811.4px;top:606.4px;width:1px;height:217px;background:#222"></div>
<div class="abs" style="left:0;top:606px;width:804px;height:1px;background:#222"></div>
<div class="abs" style="left:811.4px;top:606px;width:589px;height:1px;background:#222"></div>
<div class="abs" style="left:0;top:607px;width:804.3px;height:100px;overflow:hidden">
<div class="tr mono" style="top:1.20px">Frame 1: 87 bytes on wire (696 bits), 87 bytes captured (696 bits) on interface \Device\NPF_{FA2F1F65-A</div>
<svg class="abs" style="left:8px;top:3.00px" width="12" height="12"><path d="M3,2.5 L7.5,6 L3,9.5" fill="none" stroke="#8a8a8a" stroke-width="1.2"/></svg>
<div class="tr mono" style="top:18.66px">Ethernet II, Src: VMware_ef:02:af (00:0c:29:ef:02:af), Dst: VMware_e0:a6:73 (00:50:56:e0:a6:73)</div>
<svg class="abs" style="left:8px;top:20.46px" width="12" height="12"><path d="M3,2.5 L7.5,6 L3,9.5" fill="none" stroke="#8a8a8a" stroke-width="1.2"/></svg>
<div class="tr mono" style="top:36.12px">Internet Protocol Version 4, Src: 192.168.188.130, Dst: 192.168.188.2</div>
<svg class="abs" style="left:8px;top:37.92px" width="12" height="12"><path d="M3,2.5 L7.5,6 L3,9.5" fill="none" stroke="#8a8a8a" stroke-width="1.2"/></svg>
<div class="tr mono" style="top:53.58px">User Datagram Protocol, Src Port: 59362, Dst Port: 53</div>
<svg class="abs" style="left:8px;top:55.38px" width="12" height="12"><path d="M3,2.5 L7.5,6 L3,9.5" fill="none" stroke="#8a8a8a" stroke-width="1.2"/></svg>
<div class="tr mono" style="top:71.04px">Domain Name System (query)</div>
<svg class="abs" style="left:8px;top:72.84px" width="12" height="12"><path d="M3,2.5 L7.5,6 L3,9.5" fill="none" stroke="#8a8a8a" stroke-width="1.2"/></svg>
</div>
<div class="abs" style="left:812px;top:606.4px;width:588px;height:217px;background:#1a1a1a"></div>
<div class="abs" style="left:812px;top:607px;width:46px;height:217px;background:#313131"></div>
<div class="hx mono" style="left:820.1px;top:609.00px;color:#808080">0000</div>
<div class="hx mono" style="left:865.5px;top:609.00px">00 50 56 e0 a6 73 00 0c  29 ef 02 af 08 00 45 00</div>
<div class="hx mono" style="left:1253px;top:609.00px"><span style="color:#8c8c8c;-webkit-text-stroke:0">·</span>PV<span style="color:#8c8c8c;-webkit-text-stroke:0">·</span><span style="color:#8c8c8c;-webkit-text-stroke:0">·</span>s<span style="color:#8c8c8c;-webkit-text-stroke:0">·</span><span style="color:#8c8c8c;-webkit-text-stroke:0">·</span> )<span style="color:#8c8c8c;-webkit-text-stroke:0">·</span><span style="color:#8c8c8c;-webkit-text-stroke:0">·</span><span style="color:#8c8c8c;-webkit-text-stroke:0">·</span><span style="color:#8c8c8c;-webkit-text-stroke:0">·</span><span style="color:#8c8c8c;-webkit-text-stroke:0">·</span>E<span style="color:#8c8c8c;-webkit-text-stroke:0">·</span></div>
<div class="hx mono" style="left:820.1px;top:623.71px;color:#808080">0010</div>
<div class="hx mono" style="left:865.5px;top:623.71px">00 49 10 59 00 00 80 11  00 00 c0 a8 bc 82 c0 a8</div>
<div class="hx mono" style="left:1253px;top:623.71px"><span style="color:#8c8c8c;-webkit-text-stroke:0">·</span>I<span style="color:#8c8c8c;-webkit-text-stroke:0">·</span>Y<span style="color:#8c8c8c;-webkit-text-stroke:0">·</span><span style="color:#8c8c8c;-webkit-text-stroke:0">·</span><span style="color:#8c8c8c;-webkit-text-stroke:0">·</span><span style="color:#8c8c8c;-webkit-text-stroke:0">·</span> <span style="color:#8c8c8c;-webkit-text-stroke:0">·</span><span style="color:#8c8c8c;-webkit-text-stroke:0">·</span><span style="color:#8c8c8c;-webkit-text-stroke:0">·</span><span style="color:#8c8c8c;-webkit-text-stroke:0">·</span><span style="color:#8c8c8c;-webkit-text-stroke:0">·</span><span style="color:#8c8c8c;-webkit-text-stroke:0">·</span><span style="color:#8c8c8c;-webkit-text-stroke:0">·</span><span style="color:#8c8c8c;-webkit-text-stroke:0">·</span></div>
<div class="hx mono" style="left:820.1px;top:638.42px;color:#808080">0020</div>
<div class="hx mono" style="left:865.5px;top:638.42px">bc 02 e7 e2 00 35 00 35  fa 1c bb 03 01 00 00 01</div>
<div class="hx mono" style="left:1253px;top:638.42px"><span style="color:#8c8c8c;-webkit-text-stroke:0">·</span><span style="color:#8c8c8c;-webkit-text-stroke:0">·</span><span style="color:#8c8c8c;-webkit-text-stroke:0">·</span><span style="color:#8c8c8c;-webkit-text-stroke:0">·</span><span style="color:#8c8c8c;-webkit-text-stroke:0">·</span>5<span style="color:#8c8c8c;-webkit-text-stroke:0">·</span>5 <span style="color:#8c8c8c;-webkit-text-stroke:0">·</span><span style="color:#8c8c8c;-webkit-text-stroke:0">·</span><span style="color:#8c8c8c;-webkit-text-stroke:0">·</span><span style="color:#8c8c8c;-webkit-text-stroke:0">·</span><span style="color:#8c8c8c;-webkit-text-stroke:0">·</span><span style="color:#8c8c8c;-webkit-text-stroke:0">·</span><span style="color:#8c8c8c;-webkit-text-stroke:0">·</span><span style="color:#8c8c8c;-webkit-text-stroke:0">·</span></div>
<div class="hx mono" style="left:820.1px;top:653.13px;color:#808080">0030</div>
<div class="hx mono" style="left:865.5px;top:653.13px">00 00 00 00 00 00 07 63  6f 6e 74 65 6e 74 0f 62</div>
<div class="hx mono" style="left:1253px;top:653.13px"><span style="color:#8c8c8c;-webkit-text-stroke:0">·</span><span style="color:#8c8c8c;-webkit-text-stroke:0">·</span><span style="color:#8c8c8c;-webkit-text-stroke:0">·</span><span style="color:#8c8c8c;-webkit-text-stroke:0">·</span><span style="color:#8c8c8c;-webkit-text-stroke:0">·</span><span style="color:#8c8c8c;-webkit-text-stroke:0">·</span><span style="color:#8c8c8c;-webkit-text-stroke:0">·</span>c ontent<span style="color:#8c8c8c;-webkit-text-stroke:0">·</span>b</div>
<div class="hx mono" style="left:820.1px;top:667.84px;color:#808080">0040</div>
<div class="hx mono" style="left:865.5px;top:667.84px">6c 61 63 6b 68 61 74 2d  73 74 61 74 69 63 03 63</div>
<div class="hx mono" style="left:1253px;top:667.84px">lackhat- static<span style="color:#8c8c8c;-webkit-text-stroke:0">·</span>c</div>
<div class="hx mono" style="left:820.1px;top:682.55px;color:#808080">0050</div>
<div class="hx mono" style="left:865.5px;top:682.55px">6f 6d 00 00 01 00 01</div>
<div class="hx mono" style="left:1253px;top:682.55px">om<span style="color:#8c8c8c;-webkit-text-stroke:0">·</span><span style="color:#8c8c8c;-webkit-text-stroke:0">·</span><span style="color:#8c8c8c;-webkit-text-stroke:0">·</span><span style="color:#8c8c8c;-webkit-text-stroke:0">·</span><span style="color:#8c8c8c;-webkit-text-stroke:0">·</span></div>
<div class="abs" style="left:697px;top:600px;width:6px;height:6px;border-radius:50%;background:#424242"></div>
<div class="abs" style="left:805px;top:712px;width:6px;height:6px;border-radius:50%;background:#424242"></div>
<div class="abs" style="left:0;top:823.8px;width:1400px;height:1.2px;background:#474747"></div>
<div class="abs" style="left:0;top:825px;width:1400px;height:26px;background:#2a2a2a"></div>
<div class="abs" style="left:11.1px;top:830px;width:12.8px;height:12.8px;border-radius:50%;background:radial-gradient(circle at 40% 35%,#ec8c8c,#dc6464)"></div>
<svg class="abs" style="left:30px;top:826px" width="24" height="20"><rect x="5.7" y="3.8" width="10.4" height="13.1" fill="#ececec"/><rect x="5.7" y="3.8" width="10.4" height="2.9" fill="#1a9ae6"/><path d="M8,4 L9.5,6.7 L7,6.7 Z" fill="#f4f4f4"/><rect x="7" y="9.3" width="8" height="0.7" fill="#b8b8b8"/><rect x="7" y="12" width="8" height="0.7" fill="#b8b8b8"/><rect x="7" y="14.6" width="8" height="0.7" fill="#b8c8a8"/><path d="M10.2,12.2 L17.8,4.8" stroke="#585858" stroke-width="2.2" stroke-linecap="round"/><circle cx="10" cy="12.6" r="1" fill="#222"/></svg>
<div class="st" style="left:68px">mean_people_seo.pcapng</div>
<div class="abs" style="left:916.5px;top:833.5px;width:5.5px;height:5.5px;border-radius:50%;background:#4a4a4a"></div>
<div class="st" style="left:934px">Packets: 30405 · Displayed: 30405 (100.0%)</div>
<div class="abs" style="left:1302px;top:833.5px;width:5.5px;height:5.5px;border-radius:50%;background:#4a4a4a"></div>
<div class="st" style="left:1319px">Profile: Default</div>
</div><div class="winb"></div></body></html>
